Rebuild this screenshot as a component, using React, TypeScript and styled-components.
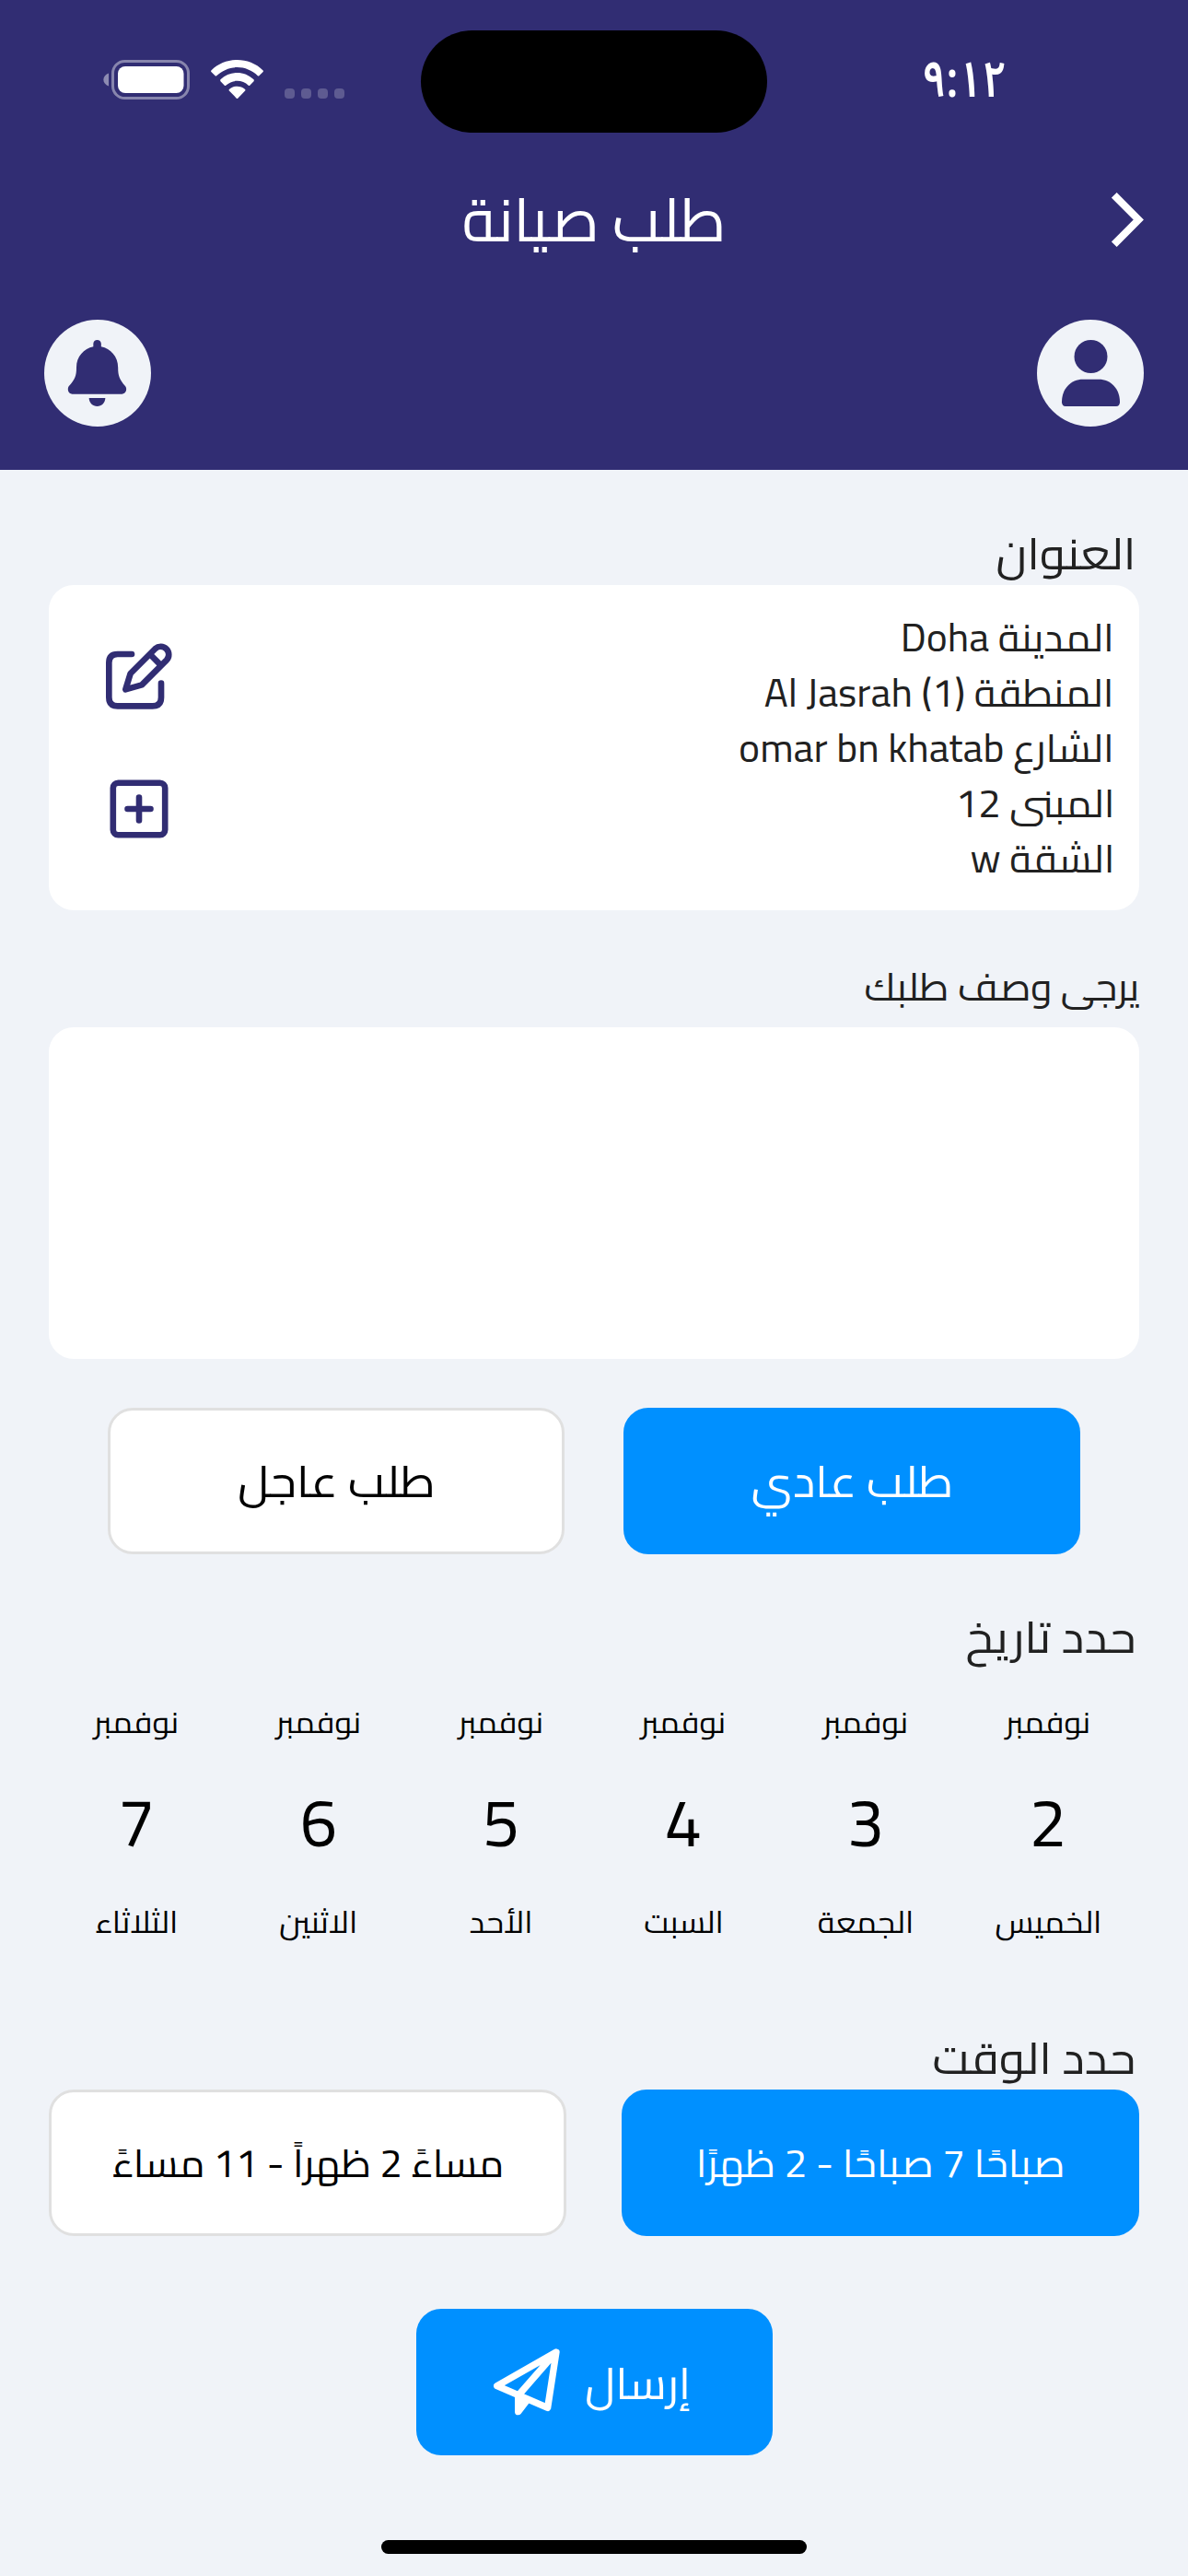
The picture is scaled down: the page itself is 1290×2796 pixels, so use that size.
import React from "react";
import styled, { createGlobalStyle } from "styled-components";

const NAVY = "#312d73";
const BLUE = "#0090ff";
const SURFACE = "#f0f3f8";
const FONT = `Cairo, "Noto Sans Arabic", "DejaVu Sans", "Noto Sans", sans-serif`;

const GlobalStyle = createGlobalStyle`
  * { box-sizing: border-box; }
  body { margin: 0; background: ${SURFACE}; }
`;

const Screen = styled.div`
  width: 1290px;
  height: 2796px;
  display: flex;
  flex-direction: column;
  background: ${SURFACE};
  color: #212121;
  font-family: ${FONT};
  font-weight: 400;
  direction: rtl;
  overflow: hidden;
`;

const Header = styled.header`
  height: 510px;
  background: ${NAVY};
  color: #fff;
`;

const StatusBar = styled.div`
  direction: ltr;
  height: 178px;
  padding-top: 33px;
  display: grid;
  grid-template-columns: 457px 376px 1fr;
  grid-template-rows: 111px;
`;

const StatusIcons = styled.div`
  padding: 32px 0 0 112px;
  display: flex;
  align-items: flex-start;
`;

const BatteryIcon = styled.svg`
  display: block;
  width: 94px;
  height: 43px;
  margin-right: 23px;
`;

const WifiIcon = styled.svg`
  display: block;
  width: 57px;
  height: 42px;
  margin-right: 23px;
`;

const SignalDots = styled.div`
  display: flex;
  gap: 7px;
  padding-top: 31px;
`;

const SignalDot = styled.span`
  width: 11px;
  height: 11px;
  border-radius: 4px;
  background: rgba(255, 255, 255, 0.22);
`;

const Island = styled.div`
  height: 111px;
  border-radius: 56px;
  background: #000;
`;

const Clock = styled.div`
  padding: 0 0 0 168px;
  font-family: "Noto Sans Arabic", "DejaVu Sans", sans-serif;
  font-size: 55px;
  font-weight: 600;
  line-height: 109px;
`;

const TitleBar = styled.div`
  height: 120px;
  padding: 0 48px;
  display: grid;
  grid-template-columns: 1fr auto 1fr;
  align-items: center;
`;

const BackIcon = styled.svg`
  display: block;
  width: 35px;
  height: 59px;
`;

const Title = styled.h1`
  margin: 0;
  font-size: 66px;
  font-weight: inherit;
  line-height: 120px;
`;

const HeaderActions = styled.div`
  margin-top: 49px;
  padding: 0 48px;
  display: flex;
  justify-content: space-between;
`;

const RoundButton = styled.div`
  width: 116px;
  height: 116px;
  border-radius: 50%;
  background: ${SURFACE};
  svg { display: block; width: 116px; height: 116px; }
`;

const Main = styled.main`
  flex: 1;
  display: flex;
  flex-direction: column;
  padding: 65px 53px 24px;
`;

const Label = styled.h2<{ $size?: number; $inset?: number; $top?: number }>`
  margin: ${(p) => p.$top ?? 0}px 0 0;
  padding-right: ${(p) => p.$inset ?? 4}px;
  font-size: ${(p) => p.$size ?? 48}px;
  font-weight: inherit;
  line-height: 50px;
  height: 50px;
`;

const Fit = styled.span<{ $x: number; $from?: string }>`
  display: inline-block;
  white-space: nowrap;
  transform: scaleX(${(p) => p.$x});
  transform-origin: ${(p) => p.$from ?? "center"};
`;

const AddressCard = styled.section`
  height: 353px;
  margin: 10px 0 58px;
  padding: 27px 27px 26px 62px;
  border-radius: 27px;
  background: #fff;
  display: flex;
  justify-content: space-between;
`;

const AddressLines = styled.div`
  font-size: 42px;
  line-height: 60px;
`;

const AddressTools = styled.div`
  margin-top: 36px;
  width: 72px;
  display: flex;
  flex-direction: column;
  align-items: center;
  gap: 76px;
`;

const EditIcon = styled.svg`
  display: block;
  width: 72px;
  height: 72px;
`;

const AddIcon = styled.svg`
  display: block;
  width: 64px;
  height: 64px;
`;

const Description = styled.div`
  height: 360px;
  margin: 19px 0 53px;
  border-radius: 27px;
  background: #fff;
`;

const ChoiceRow = styled.div<{ $gap: number; $pad?: number; $top?: number }>`
  display: grid;
  grid-template-columns: 1fr 1fr;
  column-gap: ${(p) => p.$gap}px;
  margin-top: ${(p) => p.$top ?? 0}px;
  padding: 0 ${(p) => p.$pad ?? 0}px;
`;

const Choice = styled.div<{ $active?: boolean; $size: number }>`
  height: 159px;
  padding-bottom: ${(p) => (p.$size > 42 ? 2 : 0)}px;
  display: flex;
  align-items: center;
  justify-content: center;
  border-radius: 27px;
  border: 3px solid ${(p) => (p.$active ? BLUE : "#e0e0e0")};
  background: ${(p) => (p.$active ? BLUE : "#fff")};
  color: ${(p) => (p.$active ? "#fff" : "#000")};
  font-size: ${(p) => p.$size}px;
`;

const Days = styled.div`
  display: grid;
  grid-template-columns: repeat(6, 198px);
  margin: 48px 0 102px;
  color: #000;
`;

const Day = styled.div`
  display: flex;
  flex-direction: column;
  align-items: center;
`;

const DayText = styled.div`
  font-size: 33px;
  line-height: 40px;
`;

const DayNumber = styled.div`
  margin: 39px 0 38px;
  font-size: 72px;
  line-height: 100px;
`;

const SendButton = styled.div`
  align-self: center;
  width: 387px;
  height: 159px;
  margin-top: 79px;
  padding-right: 5px;
  border-radius: 27px;
  background: ${BLUE};
  color: #fff;
  display: flex;
  align-items: center;
  justify-content: center;
  gap: 29px;
  font-size: 48px;
`;

const SendIcon = styled.svg`
  display: block;
  width: 72px;
  height: 73px;
`;

const HomeBar = styled.div`
  align-self: center;
  width: 462px;
  height: 15px;
  margin-top: auto;
  border-radius: 8px;
  background: #000;
`;

const address: [string, number][] = [
  ["المدينة Doha", 1.037],
  ["المنطقة Al Jasrah (1)", 1.039],
  ["الشارع omar bn khatab", 1.038],
  ["المبنى 12", 1.037],
  ["الشقة w", 1.037],
];

const days: [number, string][] = [
  [2, "الخميس"],
  [3, "الجمعة"],
  [4, "السبت"],
  [5, "الأحد"],
  [6, "الاثنين"],
  [7, "الثلاثاء"],
];

export default function App() {
  return (
    <>
      <GlobalStyle />
      <Screen>
        <Header>
          <StatusBar>
            <StatusIcons>
              <BatteryIcon viewBox="0 0 94 43">
                <path d="M6 14.5C-1.5 17 -1.5 26 6 28.5Z" fill="#fff" opacity="0.45" />
                <rect x="10.5" y="1.5" width="82" height="40" rx="13" fill="none" stroke="#fff" strokeWidth="3" opacity="0.42" />
                <rect x="16" y="7" width="71.5" height="29" rx="8" fill="#fff" />
              </BatteryIcon>
              <WifiIcon viewBox="0.6 0.4 15.8 11.4" preserveAspectRatio="none">
                <path
                  fill="#fff"
                  d="M8.5 2.6c2.3 0 4.5.9 6.2 2.5.1.1.3.1.4 0l1.2-1.2c.1-.1.1-.3 0-.4C12-.6 5-.6.7 3.5c-.1.1-.1.3 0 .4l1.2 1.2c.1.1.3.1.4 0C4 3.5 6.2 2.6 8.5 2.6zm0 4c1.3 0 2.5.5 3.4 1.3.1.1.3.1.4 0l1.2-1.2c.1-.1.1-.3 0-.5-2.8-2.7-7.2-2.7-10 0-.1.1-.1.3 0 .5l1.2 1.2c.1.1.3.1.4 0 1-.8 2.2-1.3 3.4-1.3zm2.4 2.9c.1-.1.1-.3 0-.4-1.4-1.2-3.4-1.2-4.8 0-.1.1-.1.3 0 .4l2.2 2.2c.1.1.3.1.4 0z"
                />
              </WifiIcon>
              <SignalDots>
                <SignalDot />
                <SignalDot />
                <SignalDot />
                <SignalDot />
              </SignalDots>
            </StatusIcons>
            <Island />
            <Clock>
              <Fit $x={0.84} $from="left">٩:١٢</Fit>
            </Clock>
          </StatusBar>
          <TitleBar>
            <BackIcon viewBox="0 0 35 59">
              <path d="M2.8 2.8L29.3 29.5L2.8 56.2" fill="none" stroke="#fff" strokeWidth="8" />
            </BackIcon>
            <Title>طلب صيانة</Title>
          </TitleBar>
          <HeaderActions>
            <RoundButton>
              <svg viewBox="0 0 348 348" fill={NAVY}>
                <circle cx="175.5" cy="120" r="54" />
                <path d="M81 268C81 225 110 194 150 194H201C241 194 270 225 270 268Q270 282 258 282H93Q81 282 81 268Z" />
              </svg>
            </RoundButton>
            <RoundButton>
              <svg viewBox="0 0 348 348" fill={NAVY}>
                <path d="M172.5 66c7 0 13 5 13 12v10c31 6 55 33 55 67 0 30 5 38 24 62 7 10 1 25-11 25H91c-12 0-17-15-11-25 20-24 25-32 25-62 0-34 24-61 55-67v-10c0-7 6-12 12.5-12z" />
                <path d="M146 255h53c0 15-12 27-26.5 27S146 270 146 255z" />
              </svg>
            </RoundButton>
          </HeaderActions>
        </Header>

        <Main>
          <Label>
            <Fit $x={1.06} $from="right">العنوان</Fit>
          </Label>
          <AddressCard>
            <AddressLines>
              {address.map(([text, x]) => (
                <div key={text}>
                  <Fit $x={x} $from="right">{text}</Fit>
                </div>
              ))}
            </AddressLines>
            <AddressTools>
              <EditIcon viewBox="45 37 216 216" fill="none" stroke={NAVY} strokeWidth="20" strokeLinecap="round" strokeLinejoin="round">
                <path d="M129 73H83Q55 73 55 101V214Q55 242 83 242H197Q225 242 225 214V168" />
                <path d="M109 188L125 136L206 55A26.2 26.2 0 0 1 243 92L162 173ZM188 73L225 110" />
              </EditIcon>
              <AddIcon viewBox="0 0 64 64" fill="none" stroke={NAVY} strokeWidth="6.6" strokeLinecap="round">
                <rect x="3.8" y="3.8" width="56.4" height="56.4" rx="5.5" />
                <path d="M32 19.5V44.5M19.5 32H44.5" />
              </AddIcon>
            </AddressTools>
          </AddressCard>

          <Label $size={42} $inset={0}>
            <Fit $x={1.012} $from="right">يرجى وصف طلبك</Fit>
          </Label>
          <Description />

          <ChoiceRow $gap={64} $pad={64}>
            <Choice $active $size={48}>
              <Fit $x={1.05}>طلب عادي</Fit>
            </Choice>
            <Choice $size={48}>
              <Fit $x={1.056}>طلب عاجل</Fit>
            </Choice>
          </ChoiceRow>

          <Label $top={64}>
            <Fit $x={1.072} $from="right">حدد تاريخ</Fit>
          </Label>
          <Days>
            {days.map(([n, name]) => (
              <Day key={n}>
                <DayText>
                  <Fit $x={1.028}>نوفمبر</Fit>
                </DayText>
                <DayNumber>{n}</DayNumber>
                <DayText>
                  <Fit $x={1.043}>{name}</Fit>
                </DayText>
              </Day>
            ))}
          </Days>

          <Label>
            <Fit $x={1.06} $from="right">حدد الوقت</Fit>
          </Label>
          <ChoiceRow $gap={60} $top={10}>
            <Choice $active $size={42}>
              <Fit $x={1.043}>صباحًا 7 صباحًا - 2 ظهرًا</Fit>
            </Choice>
            <Choice $size={42}>
              <Fit $x={1.027}>مساءً 2 ظهراً - 11 مساءً</Fit>
            </Choice>
          </ChoiceRow>

          <SendButton>
            <Fit $x={1.033}>إرسال</Fit>
            <SendIcon viewBox="33 38 216 219" stroke="#fff" strokeWidth="22" strokeLinecap="round" strokeLinejoin="round" fill="none">
              <path d="M237 50L44 160L209 231ZM235 52L116 188" />
              <path d="M113 188V244L140 209Z" fill="#fff" />
            </SendIcon>
          </SendButton>
          <HomeBar />
        </Main>
      </Screen>
    </>
  );
}
